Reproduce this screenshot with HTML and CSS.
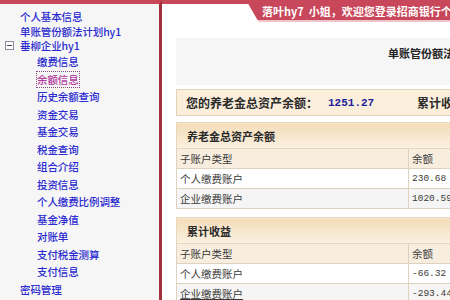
FILE: index.html
```html
<!DOCTYPE html>
<html lang="zh-CN">
<head>
  <meta charset="UTF-8" />
  <title>招商银行 企业年金 余额信息</title>
  <link rel="stylesheet" href="styles.css">
</head>
<body>

  <div class="sidebar">
    <ul class="nav">
      <li class="nav-top"><a href="#">个人基本信息</a></li>
      <li class="nav-top tight"><a href="#">单账管份额法计划hy1</a></li>
      <li class="nav-top tight">
        <span class="toggle"></span><a href="#">垂柳企业hy1</a>
        <ul class="sub">
          <li><a href="#">缴费信息</a></li>
          <li><a href="#" class="current">余额信息</a></li>
          <li><a href="#">历史余额查询</a></li>
          <li><a href="#">资金交易</a></li>
          <li><a href="#">基金交易</a></li>
          <li><a href="#">税金查询</a></li>
          <li><a href="#">组合介绍</a></li>
          <li><a href="#">投资信息</a></li>
          <li><a href="#">个人缴费比例调整</a></li>
          <li><a href="#">基金净值</a></li>
          <li><a href="#">对账单</a></li>
          <li><a href="#">支付税金测算</a></li>
          <li><a href="#">支付信息</a></li>
        </ul>
      </li>
      <li class="nav-top"><a href="#">密码管理</a></li>
    </ul>
  </div>

  <div class="main">
    <div class="topbar">
      <div class="banner">落叶hy7&nbsp;&nbsp;小姐，欢迎您登录招商银行个人企业年金查询系统</div>
    </div>

    <div class="content">
      <div class="title-box">单账管份额法计划hy1余额信息</div>

      <div class="summary">
        <span class="summary-label">您的养老金总资产余额：</span>
        <span class="summary-value">1251.27</span>
        <span class="summary-label">累计收益：</span>
      </div>

      <table class="grid">
        <tr><th colspan="2" class="section">养老金总资产余额</th></tr>
        <tr class="head"><td class="c1">子账户类型</td><td>余额</td></tr>
        <tr><td class="c1">个人缴费账户</td><td class="num">230.68</td></tr>
        <tr class="alt"><td class="c1">企业缴费账户</td><td class="num">1020.59</td></tr>
      </table>

      <table class="grid">
        <tr><th colspan="2" class="section">累计收益</th></tr>
        <tr class="head"><td class="c1">子账户类型</td><td>余额</td></tr>
        <tr><td class="c1">个人缴费账户</td><td class="num">-66.32</td></tr>
        <tr class="alt"><td class="c1"><u>企业缴费账户</u></td><td class="num">-293.44</td></tr>
      </table>
    </div>
  </div>

</body>
</html>
```

FILE: styles.css
```css
html, body {
  margin: 0;
  padding: 0;
  height: 100vh;
  overflow: hidden;
}
body {
  display: flex;
  background: #ffffff;
  font-family: "Noto Sans CJK SC", "DejaVu Sans", sans-serif;
  font-size: 10.5px;
  color: #333;
}

/* 1. Left navigation */
.sidebar {
  width: 162px;
  flex-shrink: 0;
  background: #f6f6f6;
  border-top: 4px solid #c8485a;
  border-right: 3px solid #a2303d;
  box-sizing: border-box;
}
.nav, .nav .sub {
  list-style: none;
  margin: 0;
  padding: 0;
}
.nav {
  padding-top: 5px;
}
.nav li.nav-top {
  position: relative;
  padding-left: 20px;
  line-height: 16px;
}
.nav li.tight {
  line-height: 14px;
}
.nav li.nav-top:last-child {
  line-height: 17.5px;
}
.nav a {
  color: #2a2ad0;
  text-decoration: none;
  font-weight: 500;
  white-space: nowrap;
  letter-spacing: -0.1px;
}
.nav .sub {
  padding-left: 17px;
}
.nav .sub li {
  line-height: 17.5px;
}
.nav a.current {
  color: #b23a9e;
  outline: 1px dotted #8a4a8a;
}
.toggle {
  position: absolute;
  left: 5px;
  top: 2px;
  width: 7px;
  height: 7px;
  border: 1px solid #8c8c9c;
  background: #fff;
}
.toggle::after {
  content: "";
  position: absolute;
  left: 1px; right: 1px;
  top: 3px;
  height: 1px;
  background: #444;
}

/* 2. Main area */
.main {
  flex: 1;
  min-width: 0;
  overflow: hidden;
}
.topbar {
  height: 22px;
  background: linear-gradient(#c8485a 0 4px, transparent 4px);
}
.banner {
  margin-left: 84px;
  height: 20px;
  width: 400px;
  padding-left: 16px;
  background: #c9475a;
  box-shadow: 0 2px 0 #eec3c9;
  clip-path: polygon(0 0, 100% 0, 100% 24px, 14px 24px, 8px 14px);
  color: #fff;
  font-weight: bold;
  font-size: 11px;
  line-height: 22px;
  white-space: nowrap;
}
.content {
  width: 576px;
  padding: 16px 0 0 14px;
}
.title-box {
  height: 47px;
  background: #f6f6f6;
  padding-top: 7px;
  box-sizing: border-box;
  text-align: center;
  font-weight: bold;
  font-size: 11px;
  color: #222;
}
.summary {
  margin-top: 4px;
  height: 27px;
  display: flex;
  align-items: center;
  padding-left: 9px;
  background: #fbefdc;
  border: 1px solid #e3d3b6;
  box-sizing: border-box;
  font-weight: bold;
  font-size: 12px;
  color: #2a2a2a;
}
.summary-value {
  width: 89px;
  padding-left: 10px;
  font-family: "Liberation Mono", monospace;
  font-size: 11px;
  color: #1f1f9a;
}

/* 3. Tables */
.grid {
  width: 100%;
  margin-top: 6px;
  border-collapse: collapse;
  background: #fff;
}
.grid + .grid {
  margin-top: 8px;
}
.grid th.section {
  height: 25px;
  padding: 0 0 0 10px;
  text-align: left;
  font-size: 11px;
  font-weight: bold;
  color: #2a2a2a;
  background: linear-gradient(#f3dcb8, #fbf1e2);
  border: 1px solid #e6d6bb;
}
.grid td {
  height: 19px;
  padding: 0 0 0 3px;
  border: 1px solid #ddd2c0;
  color: #3a3a3a;
  white-space: nowrap;
}
.grid td.c1 {
  width: 228px;
}
.grid tr.head td {
  background: #f8eedf;
}
.grid tr.alt td {
  background: #f5f5f5;
}
.grid td.num {
  font-family: "Liberation Mono", monospace;
  font-size: 9.5px;
}
```
